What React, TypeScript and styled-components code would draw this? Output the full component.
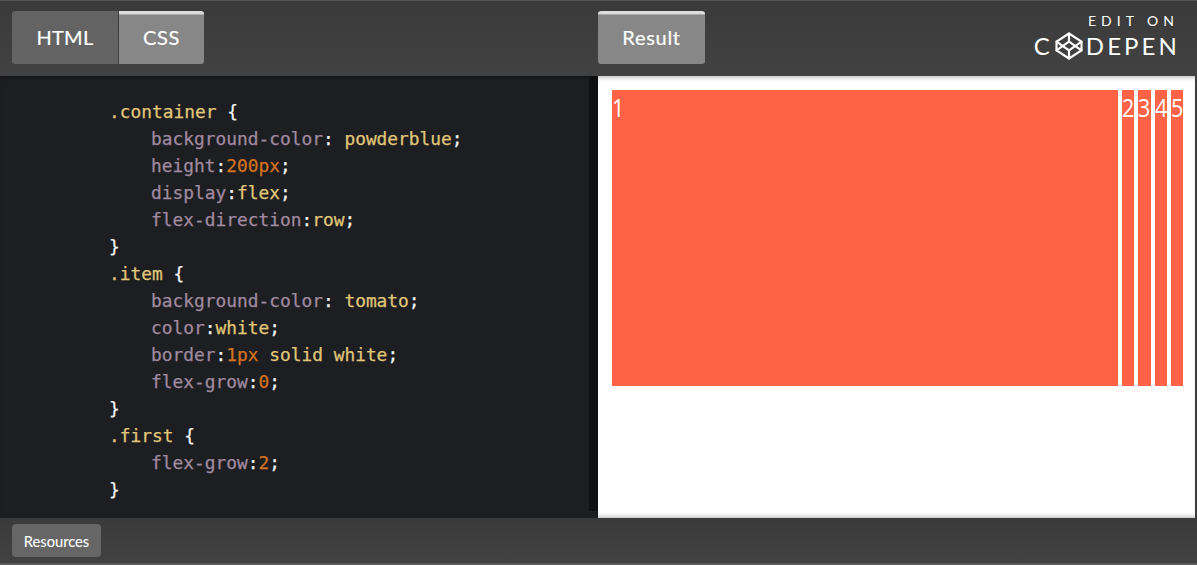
import styled, { createGlobalStyle } from "styled-components";
import { Codepen } from "lucide-react";

const GlobalStyle = createGlobalStyle`
  html, body {
    margin: 0;
    padding: 0;
    background: #3c3c3c;
  }
`;

type Tok = [string, string];

const K = "#a08ba0";
const V = "#e0c878";
const N = "#d5731e";
const W = "#f4f4f4";

const codeLines: { indent: boolean; tokens: Tok[] }[] = [
  { indent: false, tokens: [[".container", V], [" {", W]] },
  { indent: true, tokens: [["background-color", K], [": ", W], ["powderblue", V], [";", W]] },
  { indent: true, tokens: [["height", K], [":", W], ["200px", N], [";", W]] },
  { indent: true, tokens: [["display", K], [":", W], ["flex", V], [";", W]] },
  { indent: true, tokens: [["flex-direction", K], [":", W], ["row", V], [";", W]] },
  { indent: false, tokens: [["}", W]] },
  { indent: false, tokens: [[".item", V], [" {", W]] },
  { indent: true, tokens: [["background-color", K], [": ", W], ["tomato", V], [";", W]] },
  { indent: true, tokens: [["color", K], [":", W], ["white", V], [";", W]] },
  { indent: true, tokens: [["border", K], [":", W], ["1px", N], [" solid white", V], [";", W]] },
  { indent: true, tokens: [["flex-grow", K], [":", W], ["0", N], [";", W]] },
  { indent: false, tokens: [["}", W]] },
  { indent: false, tokens: [[".first", V], [" {", W]] },
  { indent: true, tokens: [["flex-grow", K], [":", W], ["2", N], [";", W]] },
  { indent: false, tokens: [["}", W]] },
];

function App() {
  return (
    <>
      <GlobalStyle />
      <Frame>
        <Header>
          <LeftTabs>
            <Tab>HTML</Tab>
            <Tab $active>CSS</Tab>
          </LeftTabs>
          <RightTabs>
            <Tab $active $single>Result</Tab>
            <Logo>
              <EditOn>EDIT ON</EditOn>
              <Brand>
                C
                <BrandIcon as={Codepen} size={30} strokeWidth={1.7} />
                DEPEN
              </Brand>
            </Logo>
          </RightTabs>
        </Header>
        <Main>
          <CodePane>
            <CodeScroll>
              {codeLines.map((line, i) => (
                <CodeLine key={i} $indent={line.indent}>
                  {line.tokens.map(([text, color], j) => (
                    <Token key={j} $color={color}>{text}</Token>
                  ))}
                </CodeLine>
              ))}
            </CodeScroll>
            <Gutter />
          </CodePane>
          <ResultPane>
            <Container>
              <Item $first><Digit>1</Digit></Item>
              <Item><Digit>2</Digit></Item>
              <Item><Digit>3</Digit></Item>
              <Item><Digit>4</Digit></Item>
              <Item><Digit>5</Digit></Item>
            </Container>
          </ResultPane>
        </Main>
        <Footer>
          <ResourcesBtn>Resources</ResourcesBtn>
        </Footer>
      </Frame>
    </>
  );
}

export default App;

const Frame = styled.div`
  width: 1197px;
  height: 565px;
  display: flex;
  flex-direction: column;
  box-sizing: border-box;
  overflow: hidden;
  background: #3d3d3d;
  border-top: 1px solid #555;
  border-bottom: 2px solid #5a5a5a;
  font-family: Lato, "Liberation Sans", sans-serif;
`;

const Header = styled.header`
  height: 75px;
  flex: none;
  display: flex;
  background: linear-gradient(#3a3a3a, #424242);
`;

const LeftTabs = styled.div`
  width: 598px;
  flex: none;
  box-sizing: border-box;
  padding: 10px 0 0 12px;
  display: flex;
  align-items: flex-start;
`;

const RightTabs = styled.div`
  flex: 1;
  display: flex;
  align-items: flex-start;
  justify-content: space-between;
  padding: 10px 20px 0 0;
`;

const Tab = styled.div<{ $active?: boolean; $single?: boolean }>`
  height: 53px;
  box-sizing: border-box;
  display: flex;
  align-items: center;
  justify-content: center;
  color: #fff;
  font-size: 20px;
  -webkit-text-stroke: 0.2px #fff;
  letter-spacing: ${(p) => (p.$single ? "0.7px" : p.$active ? "0.6px" : "0.3px")};
  background: ${(p) => (p.$active ? "#878787" : "#636363")};
  border-top: ${(p) => (p.$active ? "3px solid #dcdcdc" : "none")};
  box-shadow: ${(p) => (p.$active ? "inset 0 1px 0 #ababab" : "none")};
  padding-bottom: ${(p) => (p.$active ? "4px" : "1px")};
  width: ${(p) => (p.$single ? "107px" : p.$active ? "85px" : "106px")};
  margin-left: ${(p) => (p.$active && !p.$single ? "1px" : "0")};
  border-radius: ${(p) => (p.$single ? "3px" : p.$active ? "0 3px 3px 0" : "3px 0 0 3px")};
`;

const Logo = styled.div`
  display: flex;
  flex-direction: column;
  align-items: flex-end;
  color: #fff;
  margin-top: 2px;
`;

const EditOn = styled.div`
  font-size: 14px;
  line-height: 16px;
  letter-spacing: 5px;
  margin-right: -2px;
`;

const Brand = styled.div`
  display: flex;
  align-items: center;
  font-size: 24px;
  line-height: 30px;
  letter-spacing: 3.1px;
  margin-right: -3px;
  margin-top: 2px;
`;

const BrandIcon = styled.svg`
  margin: 0 2px 0 1px;
`;

const Main = styled.main`
  flex: 1;
  min-height: 0;
  display: flex;
`;

const CodePane = styled.section`
  width: 598px;
  flex: none;
  display: flex;
  background: #1d1e22;
  box-shadow: inset 0 4px 4px -3px rgba(0, 0, 0, 0.5);
  padding-bottom: 7px;
  box-sizing: border-box;
`;

const CodeScroll = styled.div`
  width: 589px;
  flex: none;
  box-sizing: border-box;
  padding: 22px 0 0 109px;
`;

const Gutter = styled.div`
  flex: 1;
  background: #0f1012;
`;

const CodeLine = styled.div<{ $indent: boolean }>`
  height: 27px;
  line-height: 27px;
  white-space: pre;
  font-family: "DejaVu Sans Mono", "Liberation Mono", monospace;
  font-size: 17.85px;
  -webkit-text-stroke: 0.25px currentColor;
  padding-left: ${(p) => (p.$indent ? "42px" : "0")};
`;

const Token = styled.span<{ $color: string }>`
  color: ${(p) => p.$color};
`;

const ResultPane = styled.section`
  flex: 1;
  margin-right: 2px;
  background: #fff;
  box-sizing: border-box;
  padding: 13px 11px 13px 13px;
  box-shadow: inset 0 5px 5px -4px rgba(0, 0, 0, 0.3), inset 0 -5px 5px -4px rgba(0, 0, 0, 0.3);
`;

const Container = styled.div`
  height: 298px;
  display: flex;
  background: #fff;
`;

const Item = styled.div<{ $first?: boolean }>`
  flex: ${(p) => (p.$first ? "1 1 0" : "0 0 12.2px")};
  min-width: 0;
  background: tomato;
  color: #fff;
  border: 1px solid #fff;
  margin-left: ${(p) => (p.$first ? "0" : "2px")};
  font-family: "Open Sans", sans-serif;
  font-size: 25px;
  line-height: 34px;
`;

const Digit = styled.span`
  display: inline-block;
  transform: scaleX(0.86);
  transform-origin: left center;
`;

const Footer = styled.footer`
  flex: none;
  height: 45px;
  display: flex;
  align-items: center;
  padding-left: 12px;
  background: linear-gradient(#3a3a3a, #424242);
`;

const ResourcesBtn = styled.div`
  width: 89px;
  height: 33px;
  box-sizing: border-box;
  padding-top: 1px;
  border-radius: 4px;
  background: #666;
  color: #fff;
  font-size: 14.7px;
  -webkit-text-stroke: 0.1px #fff;
  display: flex;
  align-items: center;
  justify-content: center;
`;
